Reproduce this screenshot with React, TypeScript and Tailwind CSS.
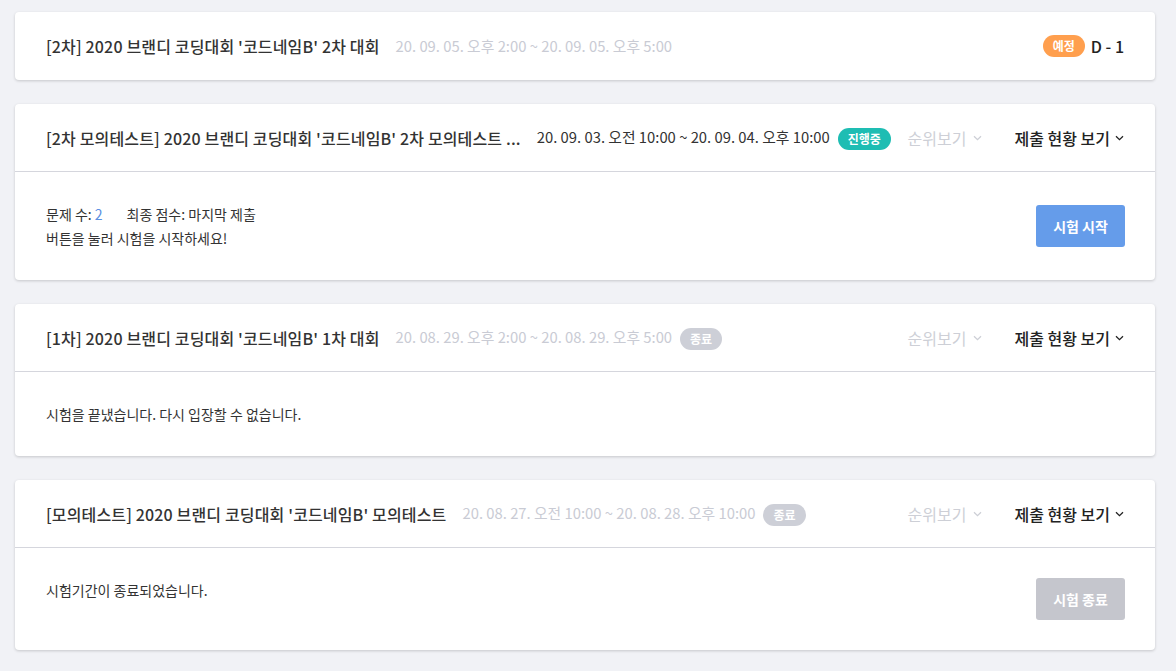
import { ReactNode } from "react";

type Badge = "예정" | "진행중" | "종료";

const badgeColor: Record<Badge, string> = {
  예정: "bg-[#ff9f4e]",
  진행중: "bg-[#1ebdb3]",
  종료: "bg-[#cdcfd7]",
};

function Chevron({ className }: { className: string }) {
  return (
    <svg width="9" height="6" viewBox="0 0 9 6" className={className} fill="none">
      <path d="M1 1.2 4.5 4.6 8 1.2" stroke="currentColor" strokeWidth="1.3" />
    </svg>
  );
}

function StatusBadge({ label }: { label: Badge }) {
  return (
    <span
      className={`inline-flex h-[22px] items-center rounded-full px-[10px] text-[12px] font-bold text-white ${badgeColor[label]}`}
    >
      {label}
    </span>
  );
}

function Header({
  title,
  date,
  dateDark,
  badge,
  right,
  tall,
}: {
  title: string;
  date: string;
  dateDark?: boolean;
  badge: Badge;
  right: ReactNode;
  tall?: boolean;
}) {
  return (
    <div className={`flex items-center px-[31px] ${tall ? "h-[68px]" : "h-[67px]"}`}>
      <span className="text-[16px] font-medium tracking-[0.15px] text-[#333]">{title}</span>
      <span className={`ml-[16px] text-[14.8px] ${dateDark ? "text-[#333]" : "text-[#c9cbd4]"}`}>{date}</span>
      {badge !== "예정" && (
        <span className="ml-[8px]">
          <StatusBadge label={badge} />
        </span>
      )}
      <div className="ml-auto flex items-center">{right}</div>
    </div>
  );
}

function ViewLinks() {
  return (
    <>
      <span className="flex items-center gap-[7px] text-[16px] text-[#cdcfd6]">
        순위보기
        <Chevron className="text-[#cdcfd6]" />
      </span>
      <span className="ml-[32px] flex items-center gap-[5px] text-[16px] font-medium text-[#222]">
        제출 현황 보기
        <Chevron className="text-[#222]" />
      </span>
    </>
  );
}

export default function App() {
  return (
    <div
      className="min-h-screen bg-[#f1f2f6] pt-[12px] pb-[20px] pl-[15px] pr-[21px]"
      style={{ fontFamily: '"Noto Sans CJK KR", "Noto Sans", sans-serif' }}
    >
      <div className="flex flex-col gap-[24px]">
        <div className="rounded-[4px] bg-white shadow-[0_1px_3px_rgba(0,0,0,0.18)]">
          <Header
            title="[2차] 2020 브랜디 코딩대회 '코드네임B' 2차 대회"
            date="20. 09. 05. 오후 2:00 ~ 20. 09. 05. 오후 5:00"
            badge="예정"
            tall
            right={
              <>
                <StatusBadge label="예정" />
                <span className="ml-[6px] text-[16px] font-medium text-[#222]">D - 1</span>
              </>
            }
          />
        </div>

        <div className="rounded-[4px] bg-white shadow-[0_1px_3px_rgba(0,0,0,0.18)]">
          <Header
            title="[2차 모의테스트] 2020 브랜디 코딩대회 '코드네임B' 2차 모의테스트 ..."
            date="20. 09. 03. 오전 10:00 ~ 20. 09. 04. 오후 10:00"
            dateDark
            badge="진행중"
            right={<ViewLinks />}
          />
          <div className="flex items-center justify-between border-t border-[#d5d6dd] px-[31px] py-[30px]">
            <div className="text-[14px] leading-[24px] text-[#333]">
              <div>
                문제 수: <span className="text-[#5b8fe2]">2</span>
                <span className="ml-[24px]">최종 점수: 마지막 제출</span>
              </div>
              <div>버튼을 눌러 시험을 시작하세요!</div>
            </div>
            <button className="mr-[-1px] h-[42px] w-[89px] rounded-[3px] bg-[#659cea] text-[14px] font-bold text-white">
              시험 시작
            </button>
          </div>
        </div>

        <div className="rounded-[4px] bg-white shadow-[0_1px_3px_rgba(0,0,0,0.18)]">
          <Header
            title="[1차] 2020 브랜디 코딩대회 '코드네임B' 1차 대회"
            date="20. 08. 29. 오후 2:00 ~ 20. 08. 29. 오후 5:00"
            badge="종료"
            right={<ViewLinks />}
          />
          <div className="border-t border-[#d5d6dd] px-[31px] py-[30px] text-[14px] leading-[24px] text-[#333]">
            시험을 끝냈습니다. 다시 입장할 수 없습니다.
          </div>
        </div>

        <div className="rounded-[4px] bg-white shadow-[0_1px_3px_rgba(0,0,0,0.18)]">
          <Header
            title="[모의테스트] 2020 브랜디 코딩대회 '코드네임B' 모의테스트"
            date="20. 08. 27. 오전 10:00 ~ 20. 08. 28. 오후 10:00"
            badge="종료"
            right={<ViewLinks />}
          />
          <div className="flex items-start justify-between border-t border-[#d5d6dd] px-[31px] py-[30px]">
            <div className="text-[14px] leading-[24px] text-[#333]">시험기간이 종료되었습니다.</div>
            <button className="mr-[-1px] h-[42px] w-[89px] rounded-[3px] bg-[#c5c6cd] text-[14px] font-bold text-white">
              시험 종료
            </button>
          </div>
        </div>
      </div>
    </div>
  );
}
